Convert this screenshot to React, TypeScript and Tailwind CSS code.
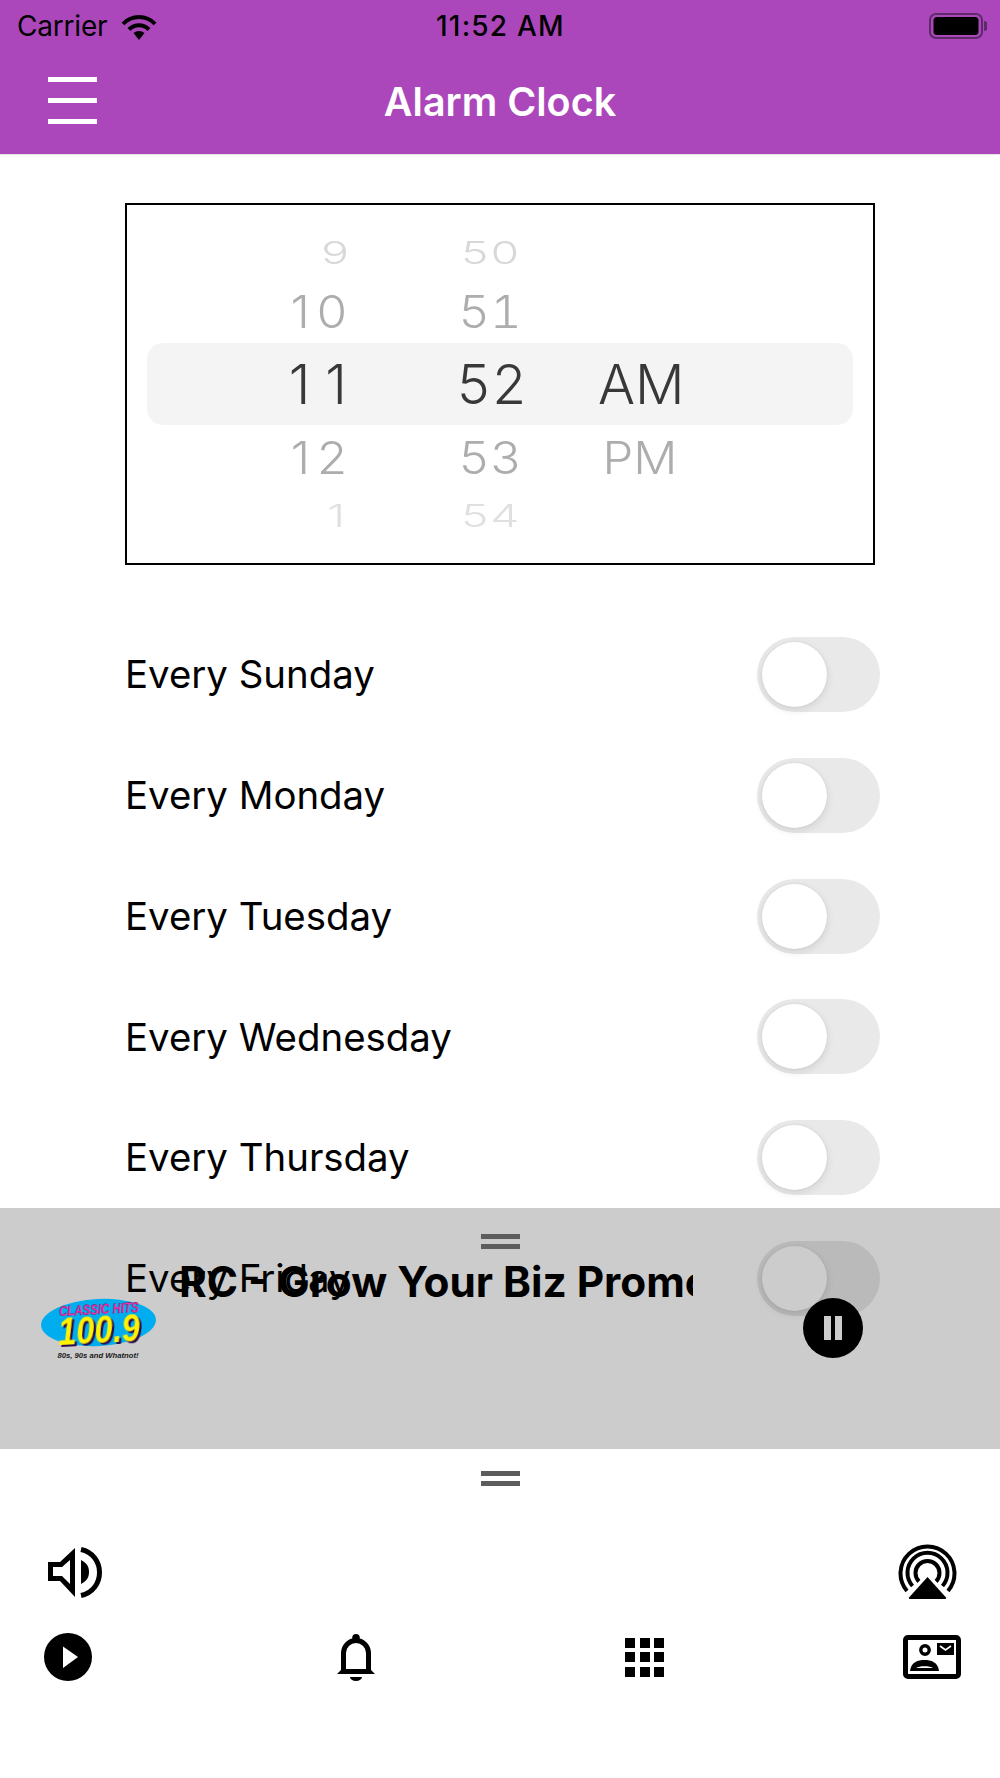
import React from "react";

const days = ["Every Sunday", "Every Monday", "Every Tuesday", "Every Wednesday", "Every Thursday", "Every Friday"];

function Toggle() {
  return (
    <div className="w-[123px] h-[75px] rounded-full bg-[#e9e9ea] p-[5px]">
      <div className="w-[65px] h-[65px] rounded-full bg-white shadow-[0_3px_8px_rgba(0,0,0,0.1),0_0_2px_rgba(0,0,0,0.1)]" />
    </div>
  );
}

function Handle() {
  return (
    <div className="flex flex-col gap-[5px] w-[39px]">
      <div className="h-[5px] bg-[#5c5c5c]" />
      <div className="h-[5px] bg-[#5c5c5c]" />
    </div>
  );
}

function PickerRow({ a, b, c, rowClass, textClass, hourClass }: { a: string; b: string; c?: string; rowClass: string; textClass: string; hourClass: string }) {
  return (
    <div className={`flex items-center mx-[20px] ${rowClass}`}>
      <div className={`w-[202px] text-right ${textClass}`}>
        <span className={`inline-block ${hourClass}`}>{a}</span>
      </div>
      <div className={`ml-[107px] w-[68px] text-center tabular-nums whitespace-nowrap ${textClass}`}>{b}</div>
      <div className={`ml-[74px] w-[84px] text-center whitespace-nowrap ${textClass}`}>{c}</div>
    </div>
  );
}

function Wifi() {
  return (
    <svg width="36" height="27" viewBox="0 0 36 27" className="ml-[13px]">
      <path d="M2 11 A22 22 0 0 1 34 11" fill="none" stroke="#000" strokeWidth="4" />
      <path d="M8 16.5 A14 14 0 0 1 28 16.5" fill="none" stroke="#000" strokeWidth="4" />
      <path d="M18 27 L12.5 20 A8.5 8.5 0 0 1 23.5 20 Z" fill="#000" />
    </svg>
  );
}

function Battery() {
  return (
    <svg width="58" height="26" viewBox="0 0 58 26">
      <rect x="1" y="1" width="52" height="24" rx="6" fill="none" stroke="#5f2a6a" strokeWidth="2" />
      <rect x="4.5" y="4" width="45" height="18" rx="3.5" fill="#000" />
      <path d="M55 8 A5 5 0 0 1 55 18 Z" fill="#5f2a6a" />
    </svg>
  );
}

function Logo() {
  return (
    <svg width="116" height="64" viewBox="0 0 116 64" className="block">
      <ellipse cx="57.5" cy="25.5" rx="57.5" ry="23.5" fill="#00aeef" transform="rotate(-3 57.5 25.5)" />
      <g transform="rotate(-3 57 15)">
        <text x="58" y="17" textAnchor="middle" fontFamily="Liberation Sans, sans-serif" fontWeight="700" fontStyle="italic" fontSize="14" fill="#ff2fa8" stroke="#5a1470" strokeWidth="0.35" textLength="80" lengthAdjust="spacingAndGlyphs">CLASSIC HITS</text>
        <text x="57" y="46" textAnchor="middle" fontFamily="Liberation Sans, sans-serif" fontWeight="700" fontStyle="italic" fontSize="38" fill="#fff200" textLength="82" lengthAdjust="spacingAndGlyphs" className="drop-shadow-[2px_2px_0_#2b0b52]">100.9</text>
      </g>
      <text x="57" y="61" textAnchor="middle" fontFamily="Liberation Sans, sans-serif" fontWeight="700" fontStyle="italic" fontSize="8" fill="#1a1a1a" textLength="81" lengthAdjust="spacingAndGlyphs">80s, 90s and Whatnot!</text>
    </svg>
  );
}

function Volume() {
  return (
    <svg width="54" height="53" viewBox="0 0 54 53">
      <path fillRule="evenodd" d="M0 16 H12 L27 2 V51 L12 35 H0 Z M5 21 V30 H14 L22 38 V14 L14 21 Z" fill="#000" />
      <path d="M33 14 C39 17 41 21 41 26 C41 31 39 35 33 38 Z" fill="#000" />
      <path d="M33 3.5 C45 6 51.5 16 51.5 26.5 C51.5 37 45 47 33 49.5" fill="none" stroke="#000" strokeWidth="5" />
    </svg>
  );
}

function Airplay() {
  return (
    <svg width="59" height="57" viewBox="0 0 59 57">
      <g fill="none" stroke="#000" strokeWidth="4">
        <path d="M9 48 A27 27 0 1 1 50 48" />
        <path d="M14.5 43 A20 20 0 1 1 44.5 43" />
        <path d="M21 38.5 A12 12 0 1 1 38 38.5" />
      </g>
      <path d="M29.5 30 L56 57 H3 Z" fill="#fff" />
      <path d="M29.5 34 L48 54.5 Q48.5 56 47 56 H12 Q10.5 56 11 54.5 Z" fill="#000" />
    </svg>
  );
}

function PlayIcon() {
  return (
    <svg width="48" height="48" viewBox="0 0 48 48">
      <circle cx="24" cy="24" r="24" fill="#000" />
      <path d="M19 13.5 L34 24 L19 35 Z" fill="#fff" />
    </svg>
  );
}

function Bell() {
  return (
    <svg width="38" height="47" viewBox="0 0 38 47">
      <circle cx="19" cy="3.8" r="3.8" fill="#000" />
      <path d="M6.5 38 V19 A12.5 12.5 0 0 1 31.5 19 V38" fill="none" stroke="#000" strokeWidth="5" />
      <path d="M0 40 L5 35 H33 L38 40 Z" fill="#000" />
      <path d="M13 43 H25 A6 4 0 0 1 13 43 Z" fill="#000" />
    </svg>
  );
}

function Grid() {
  return (
    <div className="grid grid-cols-3 gap-[4.5px] w-[39px]">
      {Array.from({ length: 9 }).map((_, i) => (
        <div key={i} className="w-[10px] h-[10px] bg-black" />
      ))}
    </div>
  );
}

function Contact() {
  return (
    <svg width="58" height="44" viewBox="0 0 58 44">
      <rect x="2.5" y="2.5" width="53" height="39" rx="2.5" fill="none" stroke="#000" strokeWidth="5" />
      <circle cx="22" cy="15" r="4.2" fill="none" stroke="#000" strokeWidth="3.4" />
      <path d="M7 36 C8 27 15 25 21.5 25 C28 25 35 27 36 36 Z" fill="#000" />
      <path d="M13 33 C16 30.5 27 30.5 30 33 Z" fill="#fff" />
      <rect x="34" y="8" width="17" height="12" fill="#000" />
      <path d="M37 11 L42.5 15 L48 11" fill="none" stroke="#fff" strokeWidth="1.6" />
    </svg>
  );
}

export default function App() {
  return (
    <div className="relative w-[1000px] h-[1778px] overflow-hidden bg-white text-black [font-family:Inter,sans-serif]">
      {/* Header */}
      <header className="h-[155px] bg-[#ac47bb] border-b border-[#e4e4e4] flex flex-col">
        <div className="h-[52px] flex items-center pl-[17px] pr-[13px]">
          <span className="w-[91px] text-[28px] leading-none tracking-[-0.2px]">Carrier</span>
          <Wifi />
          <span className="ml-[279px] w-[128px] text-center text-[28px] leading-none font-medium tracking-[1.2px] whitespace-nowrap">11:52 AM</span>
          <div className="ml-auto"><Battery /></div>
        </div>
        <div className="relative flex-1 flex items-center justify-center">
          <div className="absolute left-[48px] top-[25px] flex flex-col gap-[16px] w-[49px]">
            <div className="h-[5px] bg-white" />
            <div className="h-[5px] bg-white" />
            <div className="h-[5px] bg-white" />
          </div>
          <h1 className="text-[39.5px] leading-none font-semibold text-white">Alarm Clock</h1>
        </div>
      </header>

      {/* Content */}
      <main className="h-[1294px] pl-[125px] pr-[120px] pt-[48px]">
        <section className="w-[750px] h-[362px] border-2 border-black pt-[17px] overflow-hidden">
          <PickerRow a="9" b="50" rowClass="h-[60px]" hourClass="" textClass="text-[46px] leading-none font-[350] text-[#d8d8d8] scale-y-[0.68]" />
          <PickerRow a="10" b="51" rowClass="h-[59px]" hourClass="tracking-[7px] -mr-[5px]" textClass="text-[49px] leading-none font-[350] text-[#adadad] scale-y-[0.92]" />
          <PickerRow a="11" b="52" c="AM" rowClass="h-[82px] my-[2px] bg-[#f4f4f4] rounded-[16px]" hourClass="tracking-[15px] -mr-[13px]" textClass="text-[55px] leading-none font-[350] text-[#383838]" />
          <PickerRow a="12" b="53" c="PM" rowClass="h-[60px]" hourClass="tracking-[7px] -mr-[5px]" textClass="text-[49px] leading-none font-[350] text-[#adadad] scale-y-[0.92]" />
          <PickerRow a="1" b="54" rowClass="h-[56px]" hourClass="mr-[4px]" textClass="text-[46px] leading-none font-[350] text-[#e0e0e0] scale-y-[0.68]" />
        </section>

        <ul className="mt-[72px] flex flex-col gap-[45.75px]">
          {days.map((d) => (
            <li key={d} className="h-[75px] flex items-center justify-between">
              <span className="text-[38.4px] leading-none">{d}</span>
              <Toggle />
            </li>
          ))}
        </ul>
      </main>

      {/* Mini player overlay */}
      <div className="absolute left-0 top-[1208px] w-full h-[241px] bg-black/20 flex flex-col items-center pt-[26px]">
        <Handle />
        <div className="w-full flex items-start mt-[8px] pl-[41px]">
          <div className="mt-[40px]"><Logo /></div>
          <div className="ml-[22px] w-[514px] overflow-hidden whitespace-nowrap text-[42.3px] leading-[50px] font-bold">RC - Grow Your Biz Promo</div>
          <div className="ml-[110px] mt-[41px] w-[60px] h-[60px] rounded-full bg-black flex items-center justify-center gap-[4px]">
            <div className="w-[7px] h-[24px] bg-[#cccccc]" />
            <div className="w-[7px] h-[24px] bg-[#cccccc]" />
          </div>
        </div>
      </div>

      {/* Bottom panel */}
      <footer className="h-[329px] bg-white flex flex-col">
        <div className="flex justify-center pt-[22px]"><Handle /></div>
        <div className="flex items-start justify-between pl-[48px] pr-[43px] mt-[57px]">
          <div className="mt-[3px]"><Volume /></div>
          <Airplay />
        </div>
        <div className="flex items-center mt-[33px] pl-[44px]">
          <PlayIcon />
          <div className="ml-[245px]"><Bell /></div>
          <div className="ml-[250px]"><Grid /></div>
          <div className="ml-[239px]"><Contact /></div>
        </div>
      </footer>
    </div>
  );
}
